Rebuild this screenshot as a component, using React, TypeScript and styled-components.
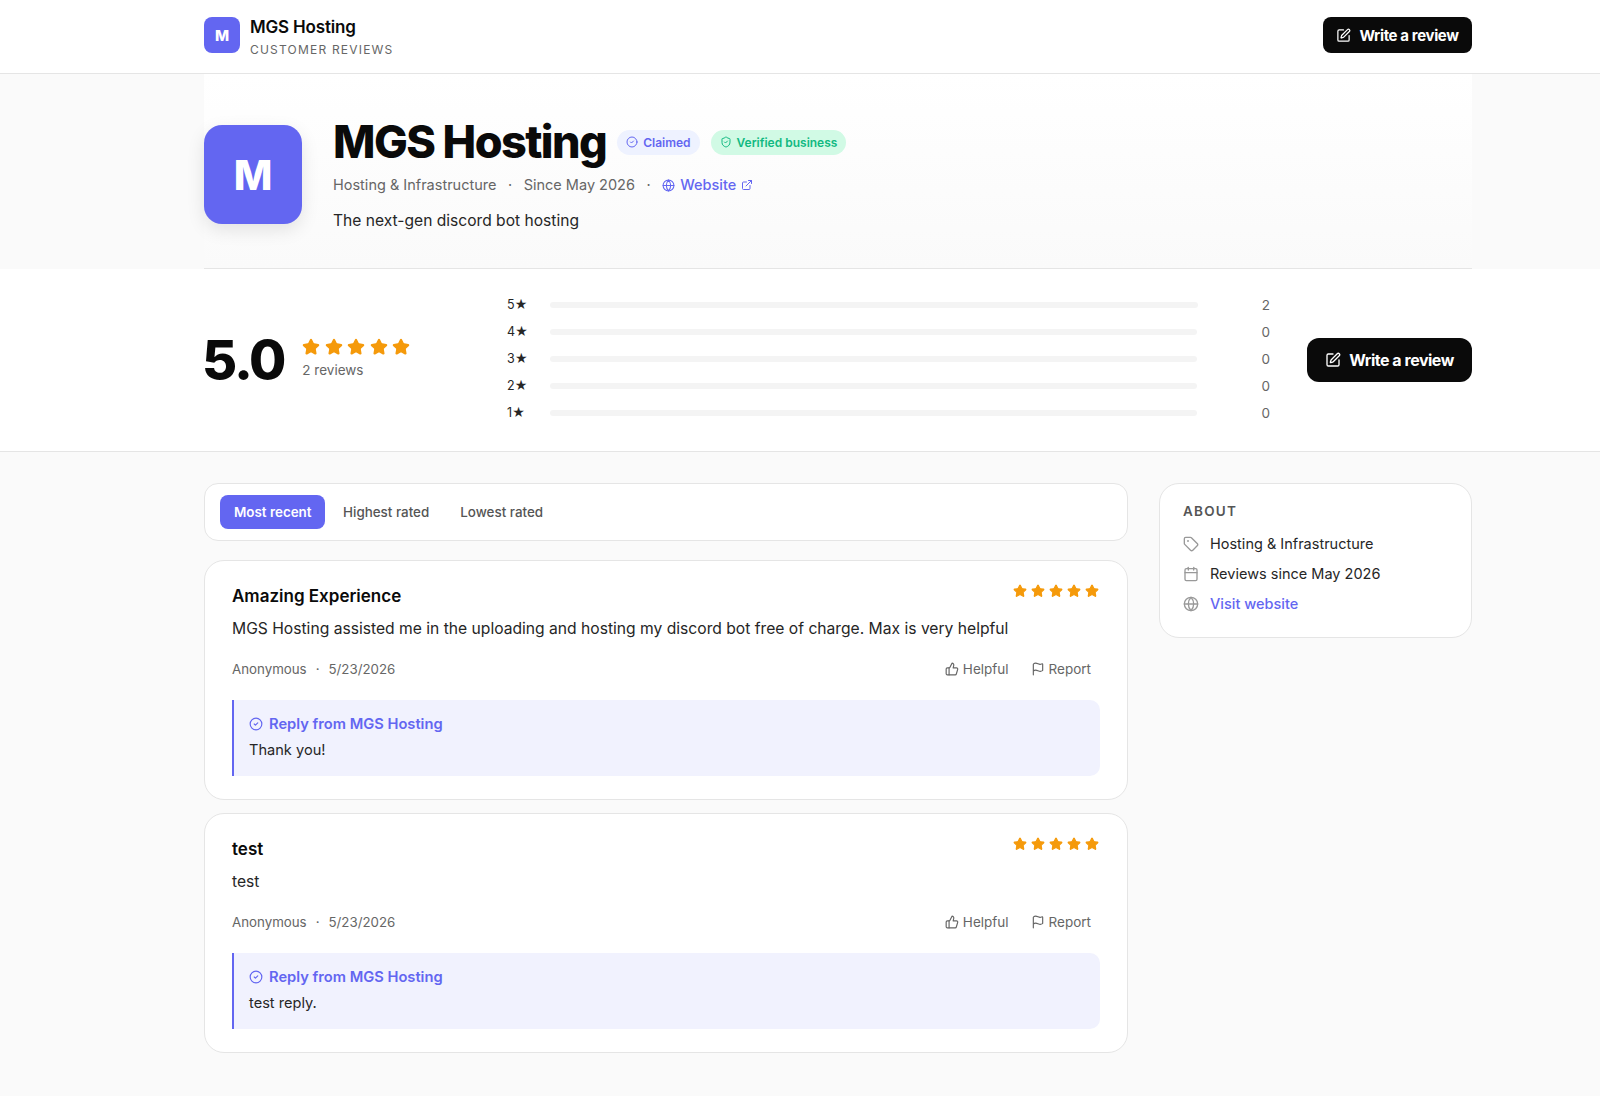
import styled, { createGlobalStyle } from "styled-components";
import {
  Calendar,
  CircleCheck,
  ExternalLink,
  Flag,
  Globe,
  ShieldCheck,
  SquarePen,
  Star,
  Tag,
  ThumbsUp,
} from "lucide-react";

const GlobalStyle = createGlobalStyle`
  html, body {
    margin: 0;
    padding: 0;
    background: #fafafa;
    font-family: Inter, "Liberation Sans", sans-serif;
    color: #0a0a0a;
  }
  * { box-sizing: border-box; }
`;

const reviews = [
  {
    title: "Amazing Experience",
    body: "MGS Hosting assisted me in the uploading and hosting my discord bot free of charge. Max is very helpful",
    reply: "Thank you!",
  },
  { title: "test", body: "test", reply: "test reply." },
];

const bars = [
  { label: "5★", count: 2 },
  { label: "4★", count: 0 },
  { label: "3★", count: 0 },
  { label: "2★", count: 0 },
  { label: "1★", count: 0 },
];

function Stars({ size, gap }: { size: number; gap: number }) {
  return (
    <StarRow $gap={gap}>
      {[0, 1, 2, 3, 4].map((i) => (
        <Star key={i} size={size} fill="#f59a0b" color="#f59a0b" strokeWidth={2} />
      ))}
    </StarRow>
  );
}

export default function App() {
  return (
    <Page>
      <GlobalStyle />
      <TopBar>
        <Inner>
          <Brand>
            <SmallLogo>M</SmallLogo>
            <BrandText>
              <BrandName>MGS Hosting</BrandName>
              <BrandSub>CUSTOMER REVIEWS</BrandSub>
            </BrandText>
          </Brand>
          <SmallButton>
            <SquarePen size={15} />
            Write a review
          </SmallButton>
        </Inner>
      </TopBar>

      <HeroWrap>
        <Hero>
          <BigLogo>M</BigLogo>
          <HeroText>
            <TitleRow>
              <Title>MGS Hosting</Title>
              <Pill $bg="#eef2ff" $color="#6366f1">
                <CircleCheck size={12} />
                Claimed
              </Pill>
              <Pill $bg="#d1fae5" $color="#10b981">
                <ShieldCheck size={12} />
                Verified business
              </Pill>
            </TitleRow>
            <Meta>
              <span>Hosting &amp; Infrastructure</span>
              <Dot>·</Dot>
              <span>Since May 2026</span>
              <Dot>·</Dot>
              <WebsiteLink>
                <Globe size={13} />
                Website
                <ExternalLink size={12} />
              </WebsiteLink>
            </Meta>
            <Description>The next-gen discord bot hosting</Description>
          </HeroText>
        </Hero>
      </HeroWrap>

      <RatingBand>
        <RatingInner>
          <Score>
            <ScoreValue>5.0</ScoreValue>
            <ScoreSide>
              <Stars size={18} gap={4.5} />
              <ReviewCount>2 reviews</ReviewCount>
            </ScoreSide>
          </Score>
          <Bars>
            {bars.map((b) => (
              <BarRow key={b.label}>
                <BarLabel>{b.label}</BarLabel>
                <BarTrack />
                <BarCount>{b.count}</BarCount>
              </BarRow>
            ))}
          </Bars>
          <LargeButton>
            <SquarePen size={16} />
            Write a review
          </LargeButton>
        </RatingInner>
      </RatingBand>

      <Main>
        <Column>
          <Tabs>
            <TabButton $active>Most recent</TabButton>
            <TabButton>Highest rated</TabButton>
            <TabButton>Lowest rated</TabButton>
          </Tabs>
          {reviews.map((r) => (
            <ReviewCard key={r.title}>
              <ReviewHead>
                <ReviewTitle>{r.title}</ReviewTitle>
                <CardStars>
                  <Stars size={14} gap={4} />
                </CardStars>
              </ReviewHead>
              <ReviewBody>{r.body}</ReviewBody>
              <ReviewFoot>
                <Author>
                  <span>Anonymous</span>
                  <Dot>·</Dot>
                  <span>5/23/2026</span>
                </Author>
                <Actions>
                  <Action>
                    <ThumbsUp size={14} />
                    Helpful
                  </Action>
                  <Action>
                    <Flag size={14} />
                    Report
                  </Action>
                </Actions>
              </ReviewFoot>
              <Reply>
                <ReplyTitle>
                  <CircleCheck size={14} />
                  Reply from MGS Hosting
                </ReplyTitle>
                <ReplyText>{r.reply}</ReplyText>
              </Reply>
            </ReviewCard>
          ))}
        </Column>
        <Sidebar>
          <SideTitle>ABOUT</SideTitle>
          <SideRow>
            <Tag size={16} />
            Hosting &amp; Infrastructure
          </SideRow>
          <SideRow>
            <Calendar size={16} />
            Reviews since May 2026
          </SideRow>
          <SideRow>
            <Globe size={16} />
            <span>Visit website</span>
          </SideRow>
        </Sidebar>
      </Main>
    </Page>
  );
}

const Page = styled.div`
  width: 1600px;
  min-height: 1096px;
  background: #fafafa;
`;

const TopBar = styled.header`
  height: 74px;
  background: #fff;
  border-bottom: 1px solid #e5e5e5;
  padding: 0 128px 3px 204px;
`;

const Inner = styled.div`
  height: 100%;
  display: flex;
  align-items: center;
  justify-content: space-between;
`;

const Brand = styled.div`
  display: flex;
  align-items: center;
  gap: 10px;
`;

const BrandText = styled.div`
  margin-top: 4px;
`;

const SmallLogo = styled.div`
  width: 36px;
  height: 36px;
  border-radius: 8px;
  background: #6366f1;
  color: #fff;
  font-size: 15px;
  font-weight: 800;
  display: flex;
  align-items: center;
  justify-content: center;
`;

const BrandName = styled.div`
  font-size: 17px;
  line-height: 22px;
  font-weight: 600;
  letter-spacing: -0.01em;
`;

const BrandSub = styled.div`
  font-size: 12px;
  line-height: 16px;
  margin-top: 4px;
  letter-spacing: 0.1em;
  color: #666;
`;

const SmallButton = styled.button`
  width: 149px;
  height: 36px;
  border: none;
  border-radius: 8px;
  background: #0a0a0a;
  color: #fff;
  font-family: inherit;
  font-size: 15px;
  font-weight: 700;
  letter-spacing: -0.025em;
  display: flex;
  align-items: center;
  justify-content: center;
  gap: 8px;
`;

const HeroWrap = styled.div`
  padding: 0 128px 0 204px;
`;

const Hero = styled.section`
  height: 195px;
  padding-top: 40px;
  display: flex;
  gap: 31px;
  background: linear-gradient(#ffffff, #fafafa);
  border-bottom: 1px solid #e5e5e5;
`;

const BigLogo = styled.div`
  width: 98px;
  height: 99px;
  margin-top: 11px;
  border-radius: 18px;
  background: #6366f1;
  color: #fff;
  font-size: 41px;
  font-weight: 800;
  display: flex;
  align-items: center;
  justify-content: center;
  box-shadow: 0 6px 18px rgba(0, 0, 0, 0.1);
`;

const HeroText = styled.div`
  display: flex;
  flex-direction: column;
`;

const TitleRow = styled.div`
  display: flex;
  align-items: center;
  gap: 11px;
`;

const Title = styled.h1`
  margin: 0;
  font-size: 45px;
  line-height: 56px;
  font-weight: 800;
  letter-spacing: -0.035em;
`;

const Pill = styled.span<{ $bg: string; $color: string }>`
  display: inline-flex;
  align-items: center;
  gap: 5px;
  height: 25px;
  padding: 0 9px;
  border-radius: 13px;
  background: ${(p) => p.$bg};
  color: ${(p) => p.$color};
  font-size: 12px;
  font-weight: 600;
`;

const Meta = styled.div`
  display: flex;
  align-items: center;
  gap: 11.5px;
  margin-top: 5px;
  font-size: 14.5px;
  line-height: 20px;
  color: #666;
`;

const Dot = styled.span`
  color: #666;
`;

const WebsiteLink = styled.span`
  display: inline-flex;
  align-items: center;
  gap: 5px;
  color: #6366f1;
  font-weight: 500;
`;

const Description = styled.p`
  margin: 15px 0 0;
  font-size: 15.6px;
  line-height: 22px;
  color: #262626;
`;

const RatingBand = styled.section`
  height: 183px;
  background: #fff;
  border-bottom: 1px solid #e5e5e5;
  padding: 0 128px 0 204px;
`;

const RatingInner = styled.div`
  height: 100%;
  display: flex;
  align-items: center;
`;

const Score = styled.div`
  width: 303px;
  display: flex;
  align-items: center;
  gap: 18px;
`;

const ScoreValue = styled.div`
  margin-left: -2px;
  font-size: 54px;
  line-height: 64px;
  font-weight: 800;
  letter-spacing: -0.04em;
`;

const ScoreSide = styled.div`
  margin-top: -3px;
`;

const StarRow = styled.div<{ $gap: number }>`
  display: flex;
  gap: ${(p) => p.$gap}px;
`;

const ReviewCount = styled.div`
  margin-top: 5px;
  font-size: 13.5px;
  line-height: 18px;
  color: #666;
`;

const Bars = styled.div`
  width: 763px;
  margin-top: -3px;
  display: flex;
  flex-direction: column;
`;

const BarRow = styled.div`
  height: 27px;
  display: flex;
  align-items: center;
`;

const BarLabel = styled.span`
  width: 43px;
  font-size: 12.5px;
  color: #262626;
`;

const BarTrack = styled.div`
  width: 649px;
  height: 6px;
  border-radius: 3px;
  background: #f4f4f4;
`;

const BarCount = styled.span`
  margin-left: 64px;
  font-size: 13.5px;
  color: #666;
`;

const LargeButton = styled(SmallButton)`
  width: 165px;
  height: 44px;
  margin-left: auto;
  border-radius: 12px;
  font-size: 16px;
  letter-spacing: -0.03em;
`;

const Main = styled.main`
  padding: 31px 128px 0 204px;
  display: grid;
  grid-template-columns: 924px 313px;
  gap: 31px;
  align-items: start;
`;

const Column = styled.div`
  display: flex;
  flex-direction: column;
  gap: 13px;
`;

const Tabs = styled.div`
  height: 58px;
  margin-bottom: 6px;
  padding: 0 15px;
  display: flex;
  align-items: center;
  gap: 6px;
  background: #fff;
  border: 1px solid #e5e5e5;
  border-radius: 14px;
`;

const TabButton = styled.button<{ $active?: boolean }>`
  height: 34px;
  padding: 0 ${(p) => (p.$active ? "13px 1px 14px" : "12.5px 1px")};
  border: none;
  border-radius: 8px;
  background: ${(p) => (p.$active ? "#6366f1" : "transparent")};
  color: ${(p) => (p.$active ? "#fff" : "#555")};
  font-family: inherit;
  font-size: 13.4px;
  font-weight: ${(p) => (p.$active ? 600 : 500)};
`;

const ReviewCard = styled.article`
  height: 240px;
  padding: 24px 27px 0;
  background: #fff;
  border: 1px solid #e5e5e5;
  border-radius: 20px;
`;

const ReviewHead = styled.div`
  display: flex;
  justify-content: space-between;
  align-items: flex-start;
`;

const CardStars = styled.div`
  margin: -1px 1px 0 0;
`;

const ReviewTitle = styled.h3`
  margin: 0;
  font-size: 17px;
  line-height: 22px;
  font-weight: 600;
`;

const ReviewBody = styled.p`
  margin: 10px 0 0;
  font-size: 15.65px;
  line-height: 24px;
  color: #262626;
`;

const ReviewFoot = styled.div`
  margin-top: 15px;
  height: 26px;
  padding-right: 9px;
  display: flex;
  align-items: center;
  justify-content: space-between;
`;

const Author = styled.div`
  display: flex;
  gap: 9px;
  font-size: 13.3px;
  color: #666;
`;

const Actions = styled.div`
  display: flex;
  gap: 22px;
`;

const Action = styled.span`
  display: inline-flex;
  align-items: center;
  gap: 4px;
  font-size: 13.5px;
  color: #666;
`;

const Reply = styled.div`
  margin-top: 18px;
  height: 76px;
  padding: 13px 18px 0 15px;
  border-left: 2px solid #6366f1;
  border-radius: 0 10px 10px 0;
  background: #f1f2fe;
`;

const ReplyTitle = styled.div`
  display: flex;
  align-items: center;
  gap: 6px;
  font-size: 14.7px;
  line-height: 22px;
  font-weight: 600;
  color: #6366f1;
`;

const ReplyText = styled.div`
  margin-top: 4px;
  font-size: 14.6px;
  line-height: 22px;
  color: #262626;
`;

const Sidebar = styled.aside`
  height: 155px;
  padding: 18px 23px 0;
  background: #fff;
  border: 1px solid #e5e5e5;
  border-radius: 20px;
`;

const SideTitle = styled.div`
  font-size: 13.5px;
  line-height: 18px;
  font-weight: 600;
  letter-spacing: 0.09em;
  color: #555;
  margin-bottom: 8px;
`;

const SideRow = styled.div`
  height: 30px;
  display: flex;
  align-items: center;
  gap: 11px;
  font-size: 14.5px;
  color: #262626;
  svg {
    color: #999;
    transform: translateY(1px);
  }
  span {
    color: #6366f1;
    font-weight: 500;
  }
`;
